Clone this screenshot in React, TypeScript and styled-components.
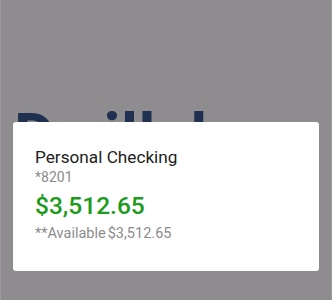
import React from 'react'
import styled, { createGlobalStyle } from 'styled-components'

const GlobalStyle = createGlobalStyle`
  html, body {
    margin: 0;
    padding: 0;
  }
  body {
    font-family: Roboto, "Liberation Sans", sans-serif;
  }
`

const Page = styled.div`
  position: relative;
  width: 332px;
  height: 300px;
  overflow: hidden;
  background: #8e8c8e;
  border-left: 1px solid #9d9b9d;
  border-right: 1px solid #9d9b9d;
  box-sizing: border-box;
`

const Heading = styled.h1`
  margin: 0;
  padding: 106px 0 0 13px;
  font-size: 64px;
  line-height: 64px;
  font-weight: 700;
  letter-spacing: 0.5px;
  color: #1f3050;
  white-space: nowrap;
`

const Overlay = styled.div`
  position: absolute;
  inset: 0;
  padding: 122px 12px 0 12px;
`

const Card = styled.div`
  height: 149px;
  box-sizing: border-box;
  background: #ffffff;
  border-radius: 3px;
  padding: 25px 22px 0;
  display: flex;
  flex-direction: column;
`

const AccountName = styled.div`
  font-size: 17.2px;
  line-height: 20px;
  color: #212121;
`

const AccountNumber = styled.div`
  margin-top: 2px;
  font-size: 14px;
  line-height: 17px;
  color: #8c8c8c;
`

const Balance = styled.div`
  margin-top: 5px;
  font-size: 24.5px;
  line-height: 29px;
  font-weight: 500;
  color: #1c9b1c;
`

const Available = styled.div`
  margin-top: 5px;
  display: flex;
  gap: 2px;
  font-size: 14.5px;
  line-height: 17px;
  color: #8c8c8c;
`

export default function App() {
  return (
    <>
      <GlobalStyle />
      <Page>
        <Heading>Dwillab</Heading>
        <Overlay>
          <Card>
            <AccountName>Personal Checking</AccountName>
            <AccountNumber>*8201</AccountNumber>
            <Balance>$3,512.65</Balance>
            <Available>
              <span>**Available</span>
              <span>$3,512.65</span>
            </Available>
          </Card>
        </Overlay>
      </Page>
    </>
  )
}
